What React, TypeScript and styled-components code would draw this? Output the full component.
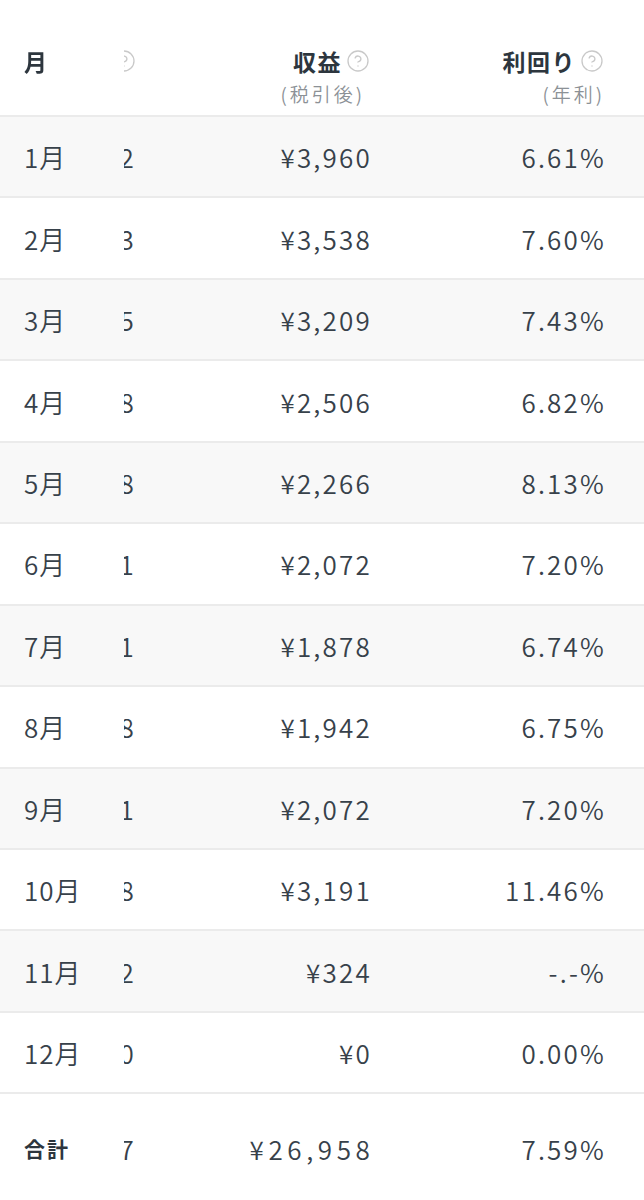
import React, { useLayoutEffect, useRef } from 'react';
import styled, { createGlobalStyle } from 'styled-components';
import { CircleHelp } from 'lucide-react';

const GlobalStyle = createGlobalStyle`
  * {
    box-sizing: border-box;
  }
  body {
    margin: 0;
    background: #ffffff;
    font-family: "Noto Sans CJK JP", "Noto Sans", sans-serif;
    color: #37414a;
  }
`;

const COLUMNS = '123.5px 198.5px 226px 272px';

const Scroller = styled.div`
  width: 100%;
  overflow-x: auto;
  scrollbar-width: none;

  &::-webkit-scrollbar {
    display: none;
  }
`;

const Table = styled.div`
  width: 820px;
`;

const HeaderRow = styled.div`
  display: grid;
  grid-template-columns: ${COLUMNS};
  height: 117px;
  padding-top: 46px;
  border-bottom: 2px solid #ebebeb;
  background: #ffffff;
`;

const Row = styled.div<{ $striped?: boolean }>`
  display: grid;
  grid-template-columns: ${COLUMNS};
  align-items: center;
  height: 81.45px;
  border-bottom: 2px solid #ebebeb;
  background: ${(p) => (p.$striped ? '#f8f8f8' : '#ffffff')};
`;

const TotalRow = styled(Row)`
  height: 108px;
  border-bottom: none;
`;

const StickyCell = styled.div`
  position: sticky;
  left: 0;
  z-index: 1;
  align-self: stretch;
  display: flex;
  align-items: center;
  padding-left: 24px;
  background: inherit;
`;

const HeadSticky = styled(StickyCell)`
  align-items: flex-start;
`;

const Cell = styled.div<{ $pad?: number }>`
  text-align: right;
  padding-right: ${(p) => p.$pad ?? 0}px;
  font-size: 26px;
  font-weight: 350;
  letter-spacing: 2.2px;
  white-space: nowrap;
`;

const MonthText = styled.span`
  font-size: 26px;
  font-weight: 350;
  letter-spacing: 1px;
`;

const HeadCell = styled.div<{ $pad?: number }>`
  display: flex;
  flex-direction: column;
  align-items: flex-end;
  padding-right: ${(p) => p.$pad ?? 0}px;
`;

const HeadTitle = styled.div`
  display: flex;
  align-items: center;
  gap: 4px;
  height: 30px;
  font-size: 23px;
  font-weight: 700;
  letter-spacing: 1.5px;
  color: #2d363e;
  white-space: nowrap;
`;

const HeadSub = styled.div<{ $shift?: number }>`
  margin-top: 3px;
  margin-right: ${(p) => p.$shift ?? 0}px;
  line-height: 30px;
  font-size: 19px;
  font-weight: 350;
  letter-spacing: 3px;
  color: #8c9196;
  white-space: nowrap;
`;

const TotalLabel = styled.span`
  font-size: 21px;
  font-weight: 700;
  letter-spacing: 2px;
  color: #2d363e;
`;

const TotalAmount = styled(Cell)`
  letter-spacing: 4.6px;
  margin-right: -2.4px;
`;

const Help = () => <CircleHelp size={24} strokeWidth={1.3} color="#c9c9c9" />;

interface MonthRow {
  month: string;
  invested: string;
  income: string;
  rate: string;
}

const rows: MonthRow[] = [
  { month: '1月', invested: '¥718,572', income: '¥3,960', rate: '6.61%' },
  { month: '2月', invested: '¥558,683', income: '¥3,538', rate: '7.60%' },
  { month: '3月', invested: '¥518,235', income: '¥3,209', rate: '7.43%' },
  { month: '4月', invested: '¥445,868', income: '¥2,506', rate: '6.82%' },
  { month: '5月', invested: '¥334,538', income: '¥2,266', rate: '8.13%' },
  { month: '6月', invested: '¥345,331', income: '¥2,072', rate: '7.20%' },
  { month: '7月', invested: '¥334,381', income: '¥1,878', rate: '6.74%' },
  { month: '8月', invested: '¥339,348', income: '¥1,942', rate: '6.75%' },
  { month: '9月', invested: '¥345,331', income: '¥2,072', rate: '7.20%' },
  { month: '10月', invested: '¥334,378', income: '¥3,191', rate: '11.46%' },
  { month: '11月', invested: '¥0,002', income: '¥324', rate: '-.-%' },
  { month: '12月', invested: '¥0,000', income: '¥0', rate: '0.00%' },
];

export default function App() {
  const scrollRef = useRef<HTMLDivElement>(null);

  useLayoutEffect(() => {
    const el = scrollRef.current;
    if (el) el.scrollLeft = el.scrollWidth;
  }, []);

  return (
    <>
      <GlobalStyle />
      <Scroller ref={scrollRef}>
        <Table>
          <HeaderRow>
            <HeadSticky>
              <HeadTitle>月</HeadTitle>
            </HeadSticky>
            <HeadCell $pad={10}>
              <HeadTitle>
                投資額 <Help />
              </HeadTitle>
            </HeadCell>
            <HeadCell $pad={2}>
              <HeadTitle>
                収益
                <Help />
              </HeadTitle>
              <HeadSub $shift={5}>(税引後)</HeadSub>
            </HeadCell>
            <HeadCell $pad={40}>
              <HeadTitle>
                利回り
                <Help />
              </HeadTitle>
              <HeadSub $shift={-1}>(年利)</HeadSub>
            </HeadCell>
          </HeaderRow>

          {rows.map((r, i) => (
            <Row key={r.month} $striped={i % 2 === 0}>
              <StickyCell>
                <MonthText>{r.month}</MonthText>
              </StickyCell>
              <Cell $pad={10}>{r.invested}</Cell>
              <Cell>{r.income}</Cell>
              <Cell $pad={38}>{r.rate}</Cell>
            </Row>
          ))}

          <TotalRow>
            <StickyCell>
              <TotalLabel>合計</TotalLabel>
            </StickyCell>
            <Cell $pad={10}>¥4,660,747</Cell>
            <TotalAmount>¥26,958</TotalAmount>
            <Cell $pad={38}>7.59%</Cell>
          </TotalRow>
        </Table>
      </Scroller>
    </>
  );
}
